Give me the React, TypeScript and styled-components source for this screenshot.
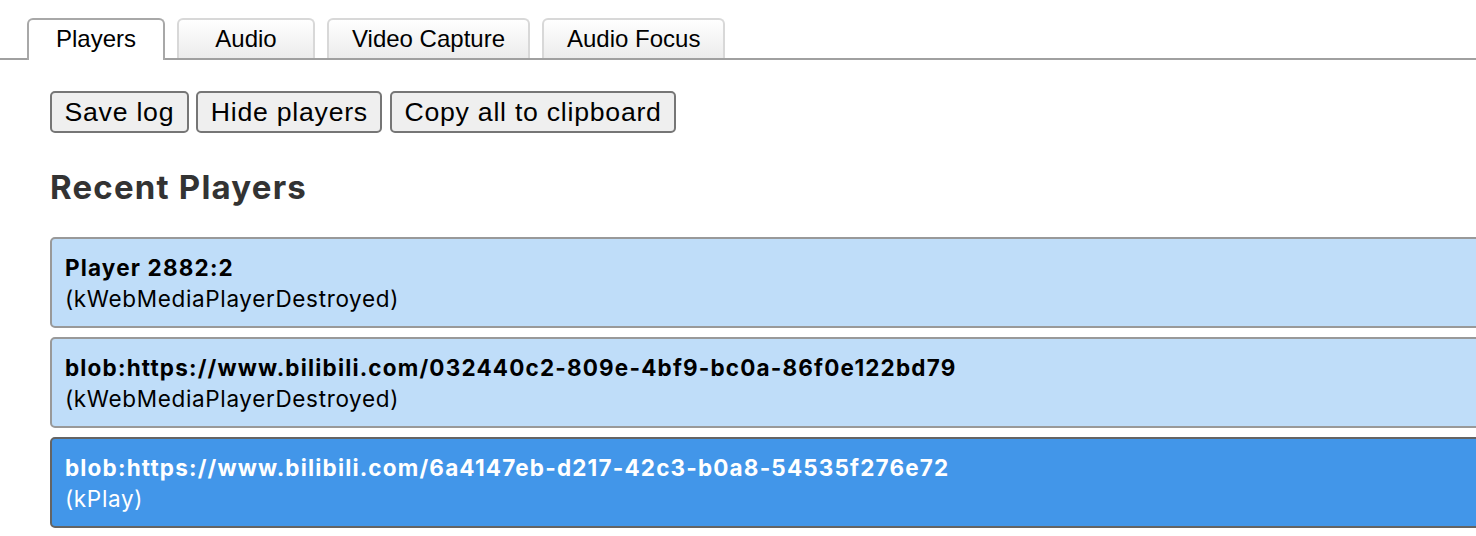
import React from "react";
import styled, { createGlobalStyle } from "styled-components";

const Global = createGlobalStyle`
  html, body { margin: 0; padding: 0; background: #fff; overflow: hidden; }
  body { font-family: "Liberation Sans", Arial, sans-serif; }
`;

const Page = styled.div`
  width: 1476px;
  height: 536px;
  overflow: hidden;
`;

const TabBar = styled.div`
  display: flex;
  align-items: flex-end;
  gap: 12px;
  padding: 18px 0 0 27px;
  border-bottom: 2px solid #a0a0a0;
  box-sizing: border-box;
  height: 60px;
`;

const Tab = styled.div<{ $active?: boolean }>`
  box-sizing: border-box;
  min-width: 138px;
  height: ${(p) => (p.$active ? "42px" : "40px")};
  margin-bottom: ${(p) => (p.$active ? "-2px" : "0")};
  padding: 0 23px;
  display: flex;
  align-items: center;
  justify-content: center;
  font-family: "Liberation Sans", Arial, sans-serif;
  font-size: 24px;
  color: #000;
  border: 2px solid ${(p) => (p.$active ? "#a8a8a8" : "#d8d8d8")};
  border-bottom: none;
  border-radius: 6px 6px 0 0;
  background: ${(p) => (p.$active ? "#fff" : "linear-gradient(#ffffff, #ececec)")};
  padding-bottom: ${(p) => (p.$active ? "2px" : "0")};
`;

const Content = styled.div`
  padding: 31px 0 0 50px;
`;

const Toolbar = styled.div`
  display: flex;
  gap: 7.5px;
`;

const Button = styled.button`
  font-family: "Liberation Sans", Arial, sans-serif;
  font-size: 26.67px;
  letter-spacing: 0.75px;
  color: #000;
  background: #efefef;
  border: 2px solid #767676;
  border-radius: 5px;
  padding: 4px 12.5px;
  line-height: 30px;
  height: 42px;
  box-sizing: border-box;
`;

const Heading = styled.h2`
  font-family: Inter, "Noto Sans", sans-serif;
  font-weight: 700;
  font-size: 33px;
  letter-spacing: 1.2px;
  color: #333;
  margin: 34px 0 0 0;
  line-height: 40px;
`;

const List = styled.div`
  display: flex;
  flex-direction: column;
  gap: 9px;
  margin-top: 30px;
  width: 1500px;
`;

const Item = styled.div<{ $selected?: boolean }>`
  box-sizing: border-box;
  height: 91px;
  padding: 13px 13px;
  border: 2px solid ${(p) => (p.$selected ? "#646464" : "#999")};
  border-radius: 5px;
  background: ${(p) => (p.$selected ? "#4296e9" : "#bfddf9")};
  color: ${(p) => (p.$selected ? "#fff" : "#000")};
  font-family: Inter, "Noto Sans", sans-serif;
  font-size: 22.5px;
  line-height: 31px;
`;

const Title = styled.div`
  font-weight: 700;
  letter-spacing: 1.17px;
`;

const Status = styled.div`
  font-weight: 400;
  letter-spacing: 0.65px;
`;

const players = [
  { title: "Player 2882:2", status: "(kWebMediaPlayerDestroyed)" },
  {
    title: "blob:https://www.bilibili.com/032440c2-809e-4bf9-bc0a-86f0e122bd79",
    status: "(kWebMediaPlayerDestroyed)",
  },
  {
    title: "blob:https://www.bilibili.com/6a4147eb-d217-42c3-b0a8-54535f276e72",
    status: "(kPlay)",
    selected: true,
  },
];

export default function App() {
  return (
    <Page>
      <Global />
      <TabBar>
        <Tab $active>Players</Tab>
        <Tab>Audio</Tab>
        <Tab>Video Capture</Tab>
        <Tab>Audio Focus</Tab>
      </TabBar>
      <Content>
        <Toolbar>
          <Button>Save log</Button>
          <Button>Hide players</Button>
          <Button>Copy all to clipboard</Button>
        </Toolbar>
        <Heading>Recent Players</Heading>
        <List>
          {players.map((p) => (
            <Item key={p.title} $selected={p.selected}>
              <Title>{p.title}</Title>
              <Status>{p.status}</Status>
            </Item>
          ))}
        </List>
      </Content>
    </Page>
  );
}
